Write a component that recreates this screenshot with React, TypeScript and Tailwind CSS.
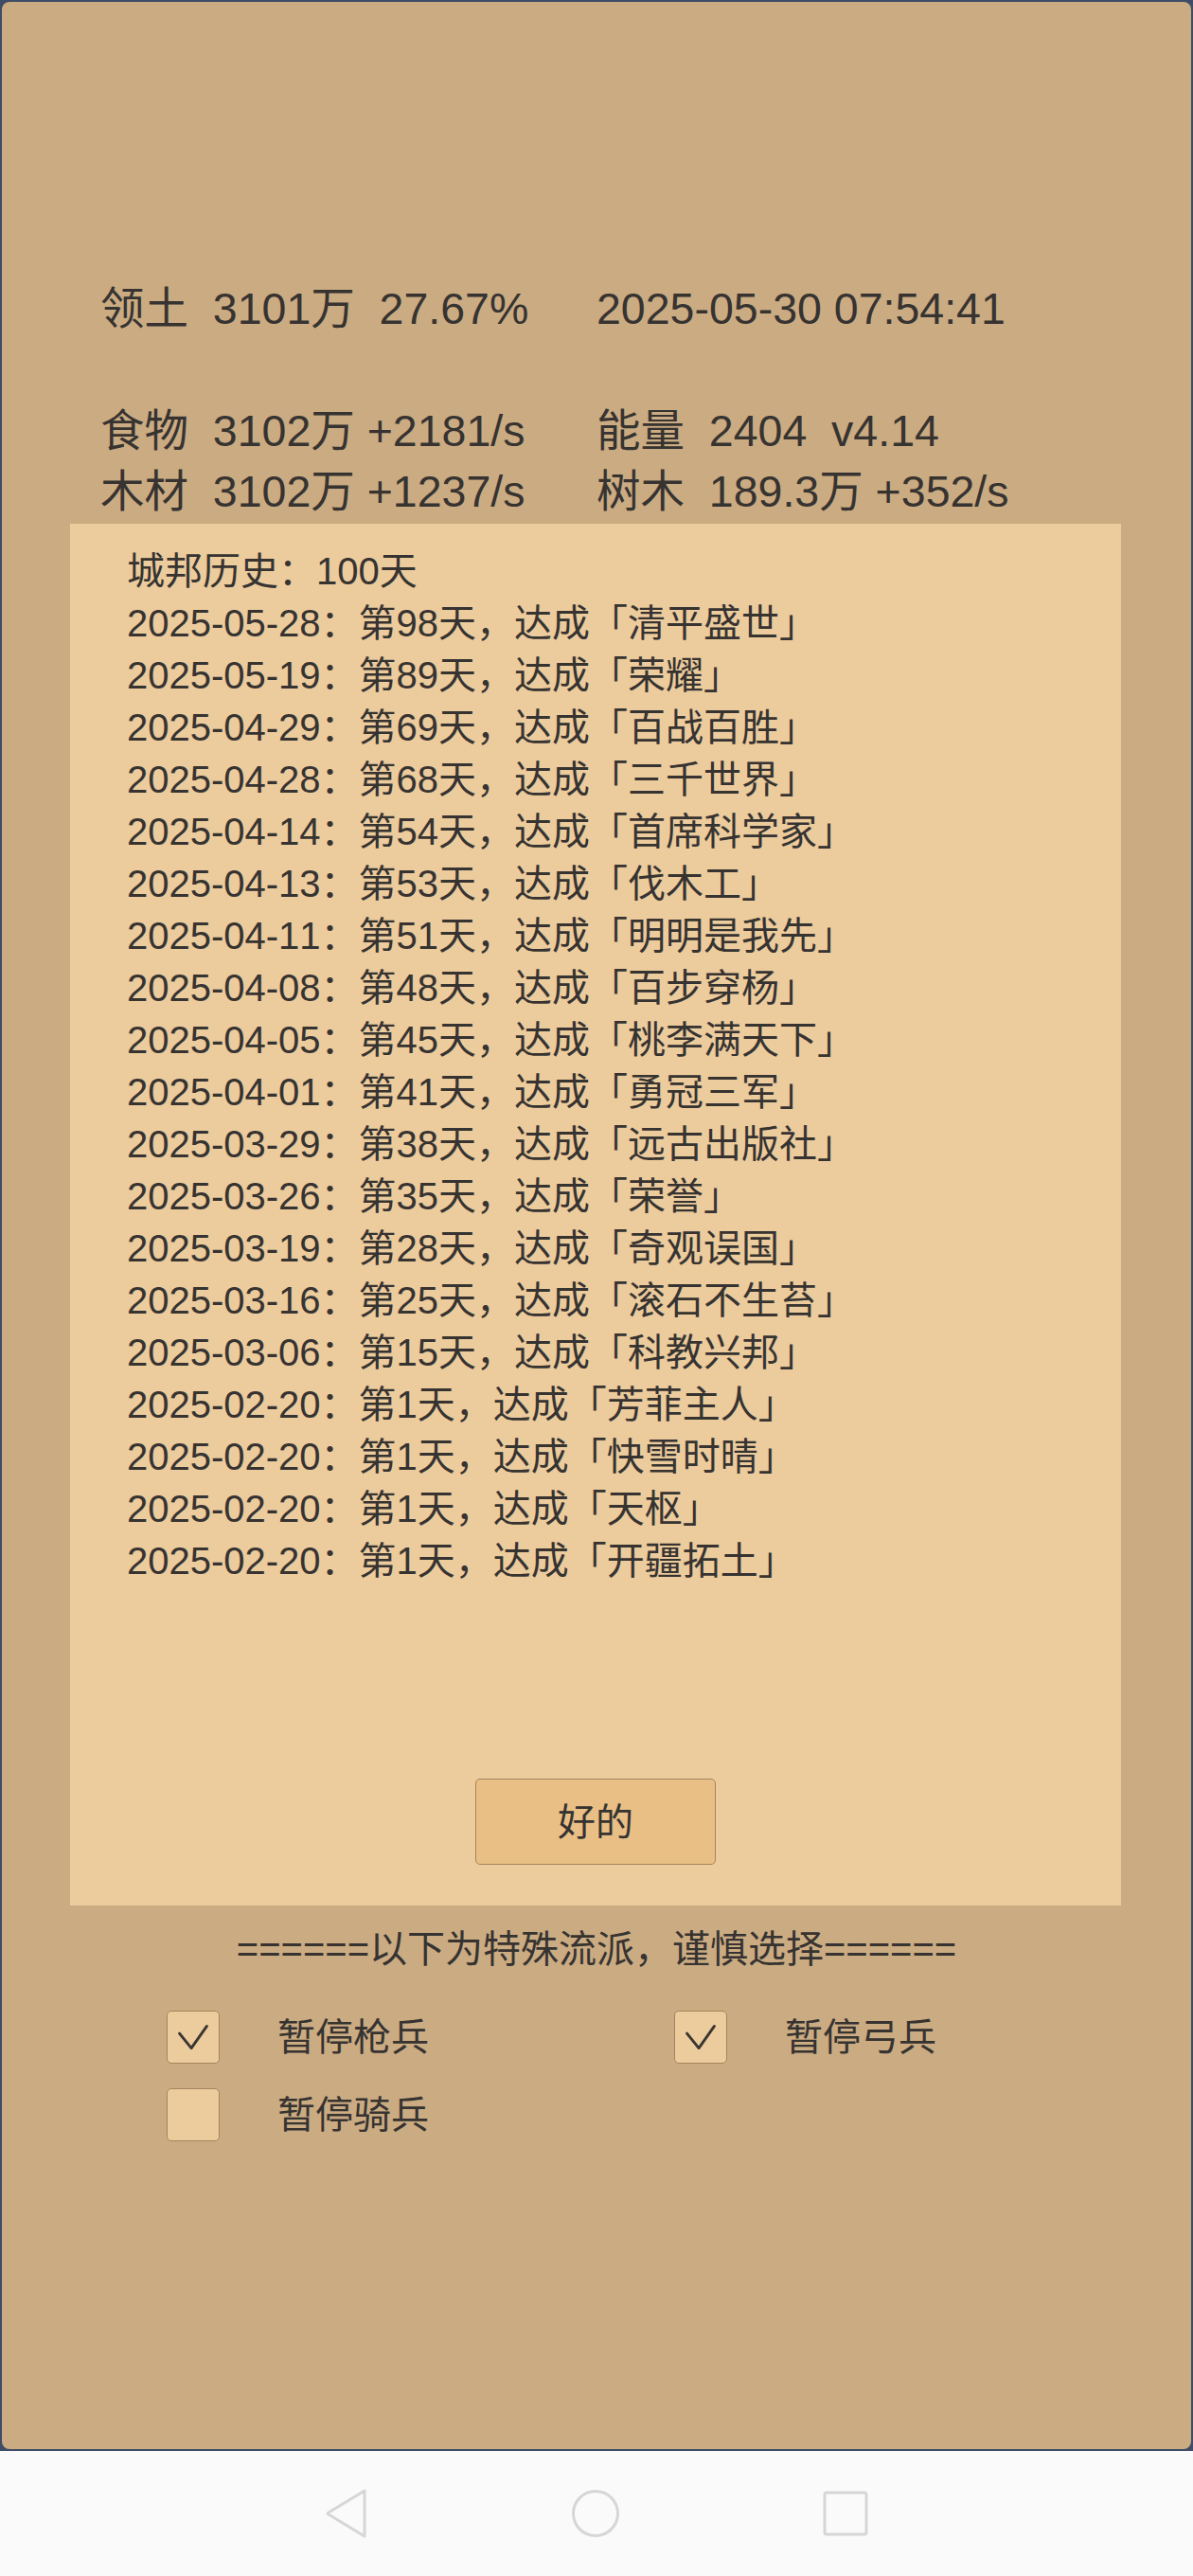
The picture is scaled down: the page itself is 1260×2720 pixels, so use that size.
import React from "react";

const history = [
  ["2025-05-28", "第98天", "清平盛世"],
  ["2025-05-19", "第89天", "荣耀"],
  ["2025-04-29", "第69天", "百战百胜"],
  ["2025-04-28", "第68天", "三千世界"],
  ["2025-04-14", "第54天", "首席科学家"],
  ["2025-04-13", "第53天", "伐木工"],
  ["2025-04-11", "第51天", "明明是我先"],
  ["2025-04-08", "第48天", "百步穿杨"],
  ["2025-04-05", "第45天", "桃李满天下"],
  ["2025-04-01", "第41天", "勇冠三军"],
  ["2025-03-29", "第38天", "远古出版社"],
  ["2025-03-26", "第35天", "荣誉"],
  ["2025-03-19", "第28天", "奇观误国"],
  ["2025-03-16", "第25天", "滚石不生苔"],
  ["2025-03-06", "第15天", "科教兴邦"],
  ["2025-02-20", "第1天", "芳菲主人"],
  ["2025-02-20", "第1天", "快雪时晴"],
  ["2025-02-20", "第1天", "天枢"],
  ["2025-02-20", "第1天", "开疆拓土"],
];

const font = {
  fontFamily: '"Liberation Sans", "Noto Sans CJK SC", sans-serif',
};

const CheckBox = ({ checked, label }: { checked: boolean; label: string }) => (
  <div className="flex items-center gap-[61px]">
    <div className="w-[56px] h-[56px] rounded-[5px] border border-[#a3845c] bg-[#eccb9d] flex items-center justify-center">
      {checked && (
        <svg width="56" height="56" viewBox="0 0 56 56" fill="none">
          <path
            d="M13 24 L26 40 L43 16"
            stroke="#3a3631"
            strokeWidth="3"
            strokeLinecap="round"
            strokeLinejoin="round"
          />
        </svg>
      )}
    </div>
    <span className="text-[40px] leading-[56px] text-[#363331]">{label}</span>
  </div>
);

export default function App() {
  return (
    <div className="w-[1260px] h-[2720px] flex flex-col bg-[#fafafa] [font-kerning:none]" style={font}>
      <div className="h-[2588px] bg-[#3e4c66] p-[2px]">
        <div className="h-full rounded-[8px] bg-[#cbab82] pt-[292px] text-[#363331]">
          <div className="text-[46.5px] leading-[64px] whitespace-pre">
            <div className="grid grid-cols-[524px_1fr] pl-[104px] h-[64px]">
              <span>领土  3101万  27.67%</span>
              <span>2025-05-30 07:54:41</span>
            </div>
            <div className="grid grid-cols-[524px_1fr] pl-[104px] h-[64px] mt-[65px]">
              <span>食物  3102万 +2181/s</span>
              <span>能量  2404  v4.14</span>
            </div>
            <div className="grid grid-cols-[524px_1fr] pl-[104px] h-[64px]">
              <span>木材  3102万 +1237/s</span>
              <span>树木  189.3万 +352/s</span>
            </div>
          </div>

          <div className="ml-[72px] mt-[2px] w-[1110px] h-[1459px] bg-[#eccb9d] flex flex-col justify-between pt-[23px] pb-[43px]">
            <div className="pl-[60px] text-[40px] leading-[55px]">
              <div>城邦历史：100天</div>
              {history.map(([date, day, name], i) => (
                <div key={i}>
                  {date}：{day}，达成「{name}」
                </div>
              ))}
            </div>
            <div className="flex justify-center">
              <button className="w-[254px] h-[91px] rounded-[5px] border border-[#a3845c] bg-[#e9bf86] text-[40px] text-[#363331]">
                好的
              </button>
            </div>
          </div>

          <div className="mt-[18px] text-center text-[40px] leading-[56px]">
            ======以下为特殊流派，谨慎选择======
          </div>

          <div className="mt-[37px] pl-[174px] grid grid-cols-[536px_1fr] gap-y-[26px]">
            <CheckBox checked label="暂停枪兵" />
            <CheckBox checked label="暂停弓兵" />
            <CheckBox checked={false} label="暂停骑兵" />
          </div>
        </div>
      </div>

      <div className="flex-1 flex items-center">
        <div className="relative w-full h-[52px]">
          <svg className="absolute left-[343px] top-0" width="46" height="52" viewBox="0 0 46 52" fill="none">
            <path
              d="M42 2 L42 50 L4 27 Q2 26 4 25 Z"
              stroke="#d6d6d6"
              strokeWidth="3"
              strokeLinejoin="round"
            />
          </svg>
          <svg className="absolute left-[603px] top-0" width="52" height="52" viewBox="0 0 52 52" fill="none">
            <circle cx="26" cy="26" r="23.5" stroke="#d6d6d6" strokeWidth="3" />
          </svg>
          <svg className="absolute left-[869px] top-[2px]" width="48" height="48" viewBox="0 0 48 48" fill="none">
            <rect x="2" y="2" width="44" height="44" rx="2" stroke="#d6d6d6" strokeWidth="3" />
          </svg>
        </div>
      </div>
    </div>
  );
}
